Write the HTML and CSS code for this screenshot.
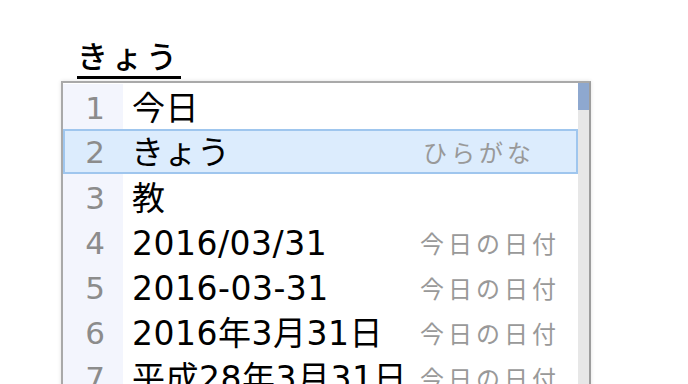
FILE: index.html
```html
<!DOCTYPE html>
<html lang="ja">
<head>
  <meta charset="UTF-8">
  <title>変換候補</title>
  <link rel="stylesheet" href="styles.css">
</head>
<body>

<div class="entrada">
  <span class="composicion">きょう</span>
</div>

<div class="candidatos">
  <div class="lista">
    <div class="fila">
      <span class="num">1</span>
      <span class="texto">今日</span>
      <span class="nota"></span>
    </div>
    <div class="fila activa">
      <span class="num">2</span>
      <span class="texto">きょう</span>
      <span class="nota">ひらがな</span>
    </div>
    <div class="fila">
      <span class="num">3</span>
      <span class="texto">教</span>
      <span class="nota"></span>
    </div>
    <div class="fila">
      <span class="num">4</span>
      <span class="texto">2016/03/31</span>
      <span class="nota">今日の日付</span>
    </div>
    <div class="fila">
      <span class="num">5</span>
      <span class="texto">2016-03-31</span>
      <span class="nota">今日の日付</span>
    </div>
    <div class="fila">
      <span class="num">6</span>
      <span class="texto">2016年3月31日</span>
      <span class="nota">今日の日付</span>
    </div>
    <div class="fila">
      <span class="num">7</span>
      <span class="texto">平成28年3月31日</span>
      <span class="nota">今日の日付</span>
    </div>
  </div>
  <div class="scroll">
    <div class="scroll-pulgar"></div>
  </div>
</div>

</body>
</html>
```

FILE: styles.css
```css
/* Ventana de candidatos del IME */
body {
  margin: 0;
  background: #fff;
  font-family: "DejaVu Sans", "Noto Sans CJK JP", sans-serif;
  color: #000;
  overflow: hidden;
}
.entrada {
  height: 81px;
  padding: 35px 0 0 77px;
  box-sizing: border-box;
}
.composicion {
  display: inline-block;
  font-family: "Noto Sans CJK JP", sans-serif;
  font-weight: 500;
  font-size: 31px;
  line-height: 39px;
  height: 44px;
  letter-spacing: 3.5px;
  margin-right: -3px;
  border-bottom: 3px solid #000;
  box-sizing: border-box;
}
.candidatos {
  margin-left: 61px;
  width: 530px;
  height: 310px;
  display: flex;
  border-top: 2px solid #a9a9a9;
  border-left: 2px solid #a9a9a9;
  border-right: 2px solid #9d9d9d;
  box-sizing: border-box;
  box-shadow: 0 0 4px rgba(0, 0, 0, 0.12);
}
.lista {
  flex: 1;
  padding-top: 1px;
  background: #fff;
}
.fila {
  display: flex;
  align-items: center;
  height: 45px;
  padding-top: 4px;
  line-height: 1.2;
  box-sizing: border-box;
}
.fila .num {
  width: 60px;
  align-self: stretch;
  margin-top: -4px;
  padding-top: 4px;
  display: flex;
  align-items: center;
  justify-content: center;
  background: #f3f5fd;
  color: #8c8c8c;
  font-size: 31px;
  padding-left: 4px;
  box-sizing: border-box;
}
.fila .texto {
  flex: 1;
  padding-left: 9px;
  font-size: 33px;
  letter-spacing: 0.5px;
  white-space: nowrap;
}
.fila .nota {
  width: 158px;
  box-sizing: border-box;
  font-family: "Noto Sans CJK JP", sans-serif;
  color: #999;
  font-size: 24px;
  letter-spacing: 4px;
  white-space: nowrap;
}
.fila.activa {
  background: #dcecfd;
  border: 2px solid #9fc6ee;
  padding-top: 2px;
}
.fila.activa .num {
  background: transparent;
  width: 58px;
  margin-top: -2px;
  padding-top: 2px;
  padding-left: 2px;
}
.fila.activa .texto {
  padding-left: 8px;
  letter-spacing: 0;
}
.fila.activa .nota {
  width: 156px;
  padding-left: 3px;
}
.scroll {
  width: 11px;
  background: #e7e7e7;
}
.scroll-pulgar {
  height: 27px;
  background: #8ea8cf;
}
```
